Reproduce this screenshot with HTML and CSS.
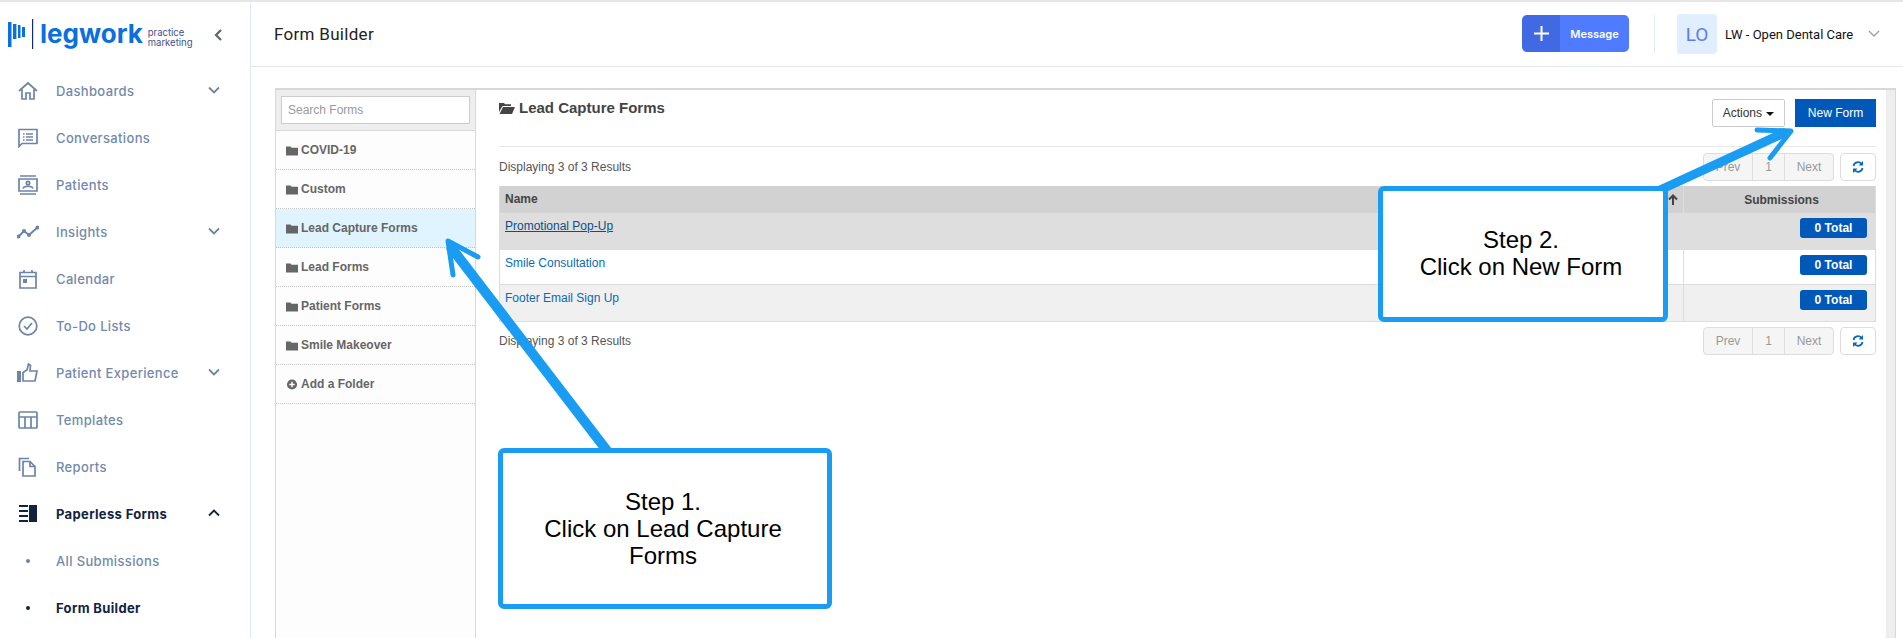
FILE: index.html
```html
<!DOCTYPE html>
<html lang="en">
<head>
<meta charset="utf-8">
<title>Form Builder</title>
<link rel="stylesheet" href="styles.css">
</head>
<body>
<div class="app">
  <aside class="sidebar">
    <div class="brand">
      <svg class="logo-mark" width="34" height="32" viewBox="0 0 34 32"><g fill="#0a6fe0"><rect x="0" y="3" width="3.500" height="25"/><rect x="5" y="5" width="3.400" height="15"/><rect x="10" y="6" width="2.500" height="13"/><rect x="14" y="8" width="3" height="10"/></g><rect x="24" y="0" width="1.200" height="30" fill="#12306b"/></svg>
      <span class="logo-word">legwork</span>
      <span class="logo-sub">practice<br>marketing</span>
      <svg class="collapse" width="10" height="14" viewBox="0 0 10 14"><path d="M8 2 3 7l5 5" fill="none" stroke="#5c6470" stroke-width="2.2"/></svg>
    </div>
    <nav class="nav">
      <a class="nav-item"><svg class="ico" viewBox="0 0 20 20"><path d="M1 10 10 2l9 8M4 8.500V18h4v-6h4v6h4V8.500" /></svg><span>Dashboards</span><svg class="chev" viewBox="0 0 12 8"><path d="m1 1.500 5 5 5-5"/></svg></a>
      <a class="nav-item"><svg class="ico" viewBox="0 0 20 20"><path d="M1 1.500h18v14H4l-3 3zM5 6h1.500M8 6h7M5 9h1.500M8 9h7M5 12h1.500M8 12h7"/></svg><span>Conversations</span></a>
      <a class="nav-item"><svg class="ico" viewBox="0 0 20 20"><path d="M2 1h16M2 19h16M1 4h18v12H1zM5 13.500c1-3 9-3 10 0"/><circle cx="10" cy="8" r="1.700"/></svg><span>Patients</span></a>
      <a class="nav-item"><svg class="ico ico-wide" viewBox="0 0 22 20"><path d="m1 15 6-6 5 4 9-8" stroke-width="2"/><circle cx="1.500" cy="14.500" r="1.200"/><circle cx="7" cy="9" r="1.200"/><circle cx="12" cy="13" r="1.200"/><circle cx="20.500" cy="5.500" r="1.200"/></svg><span>Insights</span><svg class="chev" viewBox="0 0 12 8"><path d="m1 1.500 5 5 5-5"/></svg></a>
      <a class="nav-item"><svg class="ico" viewBox="0 0 20 20"><path d="M2 3.500h16V19H2zM2 7.500h16M6 1v3M14 1v3"/><rect class="solid" x="5" y="10" width="4" height="4"/></svg><span>Calendar</span></a>
      <a class="nav-item"><svg class="ico" viewBox="0 0 20 20"><circle cx="10" cy="10" r="8.800"/><path d="m6 10 3 3 5-6"/></svg><span>To-Do Lists</span></a>
      <a class="nav-item"><svg class="ico ico-wide" viewBox="0 0 22 20"><rect class="solid" x="0" y="8" width="4" height="11"/><path d="M6 9.500 10 7l1.500-6 2 1.500-.5 5.500h7l-2 10H6z"/></svg><span>Patient Experience</span><svg class="chev" viewBox="0 0 12 8"><path d="m1 1.500 5 5 5-5"/></svg></a>
      <a class="nav-item"><svg class="ico" viewBox="0 0 20 20"><rect x="1" y="2" width="18" height="16" rx="1"/><path d="M1 7h18M7 7v11M13 7v11"/></svg><span>Templates</span></a>
      <a class="nav-item"><svg class="ico" viewBox="0 0 20 20"><path d="M1.500 14V1.500H11M5 4.500h7l5 5V19H5zM12 4.500v5h5"/></svg><span>Reports</span></a>
      <a class="nav-item nav-active"><svg class="ico" viewBox="0 0 20 20"><path d="M1 2h9M1 7h9M1 12h9M1 17h9" stroke-width="2"/><rect class="solid" x="11" y="1" width="8" height="17"/></svg><span>Paperless Forms</span><svg class="chev" viewBox="0 0 12 8"><path d="m1 6.500 5-5 5 5"/></svg></a>
      <a class="nav-item nav-sub"><i class="dot"></i><span>All Submissions</span></a>
      <a class="nav-item nav-sub nav-active"><i class="dot"></i><span>Form Builder</span></a>
    </nav>
  </aside>
  <div class="main">
    <header class="topbar">
      <h1 class="page-title">Form Builder</h1>
      <div class="msg-btn"><span class="msg-plus"><svg width="15" height="15" viewBox="0 0 15 15"><path d="M7.500 0v15M0 7.500h15" stroke="#fff" stroke-width="2"/></svg></span><span class="msg-label">Message</span></div>
      <div class="top-sep"></div>
      <div class="avatar">LO</div>
      <div class="account">LW - Open Dental Care</div>
      <svg class="acct-chev" width="12" height="8" viewBox="0 0 12 8"><path d="m1 1 5 5 5-5" fill="none" stroke="#9aa0a8" stroke-width="1.400"/></svg>
    </header>
    <section class="content">
      <div class="panel">
        <div class="folders">
          <div class="search-wrap"><input class="search" type="text" placeholder="Search Forms"></div>
          <div class="folder"><svg class="f-ico" viewBox="0 0 12 10"><path d="M0 1h4.500l1 1.200H12V10H0z"/></svg>COVID-19</div>
          <div class="folder"><svg class="f-ico" viewBox="0 0 12 10"><path d="M0 1h4.500l1 1.200H12V10H0z"/></svg>Custom</div>
          <div class="folder folder-on"><svg class="f-ico" viewBox="0 0 12 10"><path d="M0 1h4.500l1 1.200H12V10H0z"/></svg>Lead Capture Forms</div>
          <div class="folder"><svg class="f-ico" viewBox="0 0 12 10"><path d="M0 1h4.500l1 1.200H12V10H0z"/></svg>Lead Forms</div>
          <div class="folder"><svg class="f-ico" viewBox="0 0 12 10"><path d="M0 1h4.500l1 1.200H12V10H0z"/></svg>Patient Forms</div>
          <div class="folder"><svg class="f-ico" viewBox="0 0 12 10"><path d="M0 1h4.500l1 1.200H12V10H0z"/></svg>Smile Makeover</div>
          <div class="folder"><svg class="f-ico" viewBox="0 0 12 12"><circle cx="6" cy="6" r="5.500"/><path d="M6 3v6M3 6h6" stroke="#fff" stroke-width="1.600"/></svg>Add a Folder</div>
        </div>
        <div class="detail">
          <div class="detail-head">
            <h2 class="detail-title"><svg class="open-ico" width="16" height="12" viewBox="0 0 16 12"><path d="M0 10V1h5l1 1.300h6V4H3.500zM4 5h12l-3 7H0.500z"/></svg>Lead Capture Forms</h2>
            <div class="actions-wrap"><button class="btn-actions">Actions <i class="caret"></i></button><button class="btn-new">New Form</button></div>
          </div>
          <div class="result-row">
            <span class="result-text">Displaying 3 of 3 Results</span>
            <div class="pager"><span>Prev</span><span class="pg-n">1</span><span>Next</span></div>
            <button class="refresh"><svg width="12" height="12" viewBox="0 0 12 12"><path d="M1.500 5A4.500 4.500 0 0 1 9.500 3M10.500 7A4.500 4.500 0 0 1 2.500 9" fill="none" stroke="#0a6ab8" stroke-width="1.800"/><path d="M11 0v4.500H6.500zM1 12V7.500h4.500z" fill="#0a6ab8"/></svg></button>
          </div>
          <div class="forms-table">
            <div class="t-row t-head"><div class="c-name">Name<svg class="sort" width="10" height="11" viewBox="0 0 10 11"><path d="M5 11V2M1 5.500 5 1.500l4 4" fill="none" stroke="#444" stroke-width="2"/></svg></div><div class="c-sub">Submissions</div></div>
            <div class="t-row t-a"><div class="c-name"><a class="lnk lnk-hover">Promotional Pop-Up</a></div><div class="c-sub"><span class="total">0 Total</span></div></div>
            <div class="t-row t-b"><div class="c-name"><a class="lnk">Smile Consultation</a></div><div class="c-sub"><span class="total">0 Total</span></div></div>
            <div class="t-row t-c"><div class="c-name"><a class="lnk">Footer Email Sign Up</a></div><div class="c-sub"><span class="total">0 Total</span></div></div>
          </div>
          <div class="result-row result-bottom">
            <span class="result-text">Displaying 3 of 3 Results</span>
            <div class="pager"><span>Prev</span><span class="pg-n">1</span><span>Next</span></div>
            <button class="refresh"><svg width="12" height="12" viewBox="0 0 12 12"><path d="M1.500 5A4.500 4.500 0 0 1 9.500 3M10.500 7A4.500 4.500 0 0 1 2.500 9" fill="none" stroke="#0a6ab8" stroke-width="1.800"/><path d="M11 0v4.500H6.500zM1 12V7.500h4.500z" fill="#0a6ab8"/></svg></button>
          </div>
        </div>
      </div>
    </section>
  </div>
</div>
<svg class="arrows" width="1903" height="638" viewBox="0 0 1903 638">
  <g fill="none" stroke="#1a9cf2" stroke-linecap="round" stroke-linejoin="round">
    <path d="M608 452 450 246" stroke-width="10" stroke-linecap="butt"/>
    <path d="M478 257 448 241 453 275" stroke-width="5"/>
    <path d="M1660 190 1786 132" stroke-width="9" stroke-linecap="butt"/>
    <path d="M1757 130 1791 131 1770 158" stroke-width="5"/>
  </g>
</svg>
<div class="callout callout-one">Step 1.<br>Click on Lead Capture Forms</div>
<div class="callout callout-two">Step 2.<br>Click on New Form</div>
</body>
</html>
```
FILE: styles.css
```css
* { box-sizing: border-box; }
html, body { margin: 0; height: 638px; overflow: hidden; background: #fff; }
body { font-family: "Liberation Sans", Arial, sans-serif; color: #333; position: relative; }
.app { display: flex; height: 638px; border-top: 2px solid #e6e6e6; }

.sidebar { width: 251px; flex: none; border-right: 1px solid #dfe9f5; display: flex; flex-direction: column; }
.brand { height: 65px; flex: none; display: flex; align-items: flex-start; padding: 17px 0 0 8px; position: relative; }
.logo-mark { flex: none; }
.logo-word { font-family: Inter, sans-serif; font-weight: 700; font-size: 26px; line-height: 30px; color: #0a6fe0; margin-left: -2px; }
.logo-sub { font-family: Inter, sans-serif; font-size: 9.500px; line-height: 10px; color: #42518c; margin: 9px 0 0 5px; }
.collapse { position: absolute; left: 213px; top: 26px; }
.nav { display: flex; flex-direction: column; }
.nav-item { height: 47px; display: flex; align-items: center; padding-left: 18px; position: relative; font-family: Inter, sans-serif; font-size: 13px; font-weight: 500; letter-spacing: 0.35px; color: #7289ad; }
.ico { width: 20px; height: 20px; flex: none; margin-right: 18px; fill: none; stroke: #6c84a8; stroke-width: 1.700; }
.ico-wide { width: 22px; margin-left: -1px; margin-right: 17px; }
.ico .solid { fill: #6c84a8; stroke: none; }
.chev { position: absolute; left: 208px; top: 19px; width: 12px; height: 8px; fill: none; stroke: #6c84a8; stroke-width: 1.800; }
.nav-active { color: #12233f; font-weight: 700; }
.nav-active .ico, .nav-active .chev { stroke: #12233f; }
.nav-active .ico .solid { fill: #12233f; }
.nav-sub { padding-left: 26px; }
.dot { width: 4px; height: 4px; border-radius: 50%; background: #6c84a8; margin-right: 26px; }
.nav-active .dot { background: #12233f; }

.main { flex: 1; min-width: 0; display: flex; flex-direction: column; }
.topbar { height: 65px; border-bottom: 1px solid #dfe9f5; display: flex; align-items: center; padding-left: 23px; flex: none; }
.page-title { margin: 0 auto 0 0; font-family: Roboto, sans-serif; font-weight: 400; font-size: 17px; color: #222; letter-spacing: 0.3px; }
.msg-btn { display: flex; width: 107px; height: 37px; border-radius: 5px; overflow: hidden; margin-top: -1px; }
.msg-plus { width: 38px; background: #4169e1; display: flex; align-items: center; justify-content: center; }
.msg-label { flex: 1; background: #4f7bff; color: #fff; font-family: Inter, sans-serif; font-size: 11px; font-weight: 600; display: flex; align-items: center; justify-content: center; }
.top-sep { width: 1px; height: 38px; background: #e0eaf5; margin: 0 22px 0 25px; }
.avatar { width: 40px; height: 40px; background: #e0eeff; border-radius: 3px; color: #5a80e8; font-family: Roboto, sans-serif; font-size: 19px; display: flex; align-items: center; justify-content: center; }
.account { font-family: Roboto, sans-serif; font-size: 13px; color: #111; margin-left: 8px; width: 143px; }
.acct-chev { margin-right: 23px; }

.content { flex: 1; min-height: 0; padding: 21px 7px 0 24px; }
.panel { height: 100%; display: flex; border-top: 2px solid #d8d8d8; border-left: 1px solid #d8d8d8; border-right: 1px solid #d8d8d8; }
.folders { width: 200px; flex: none; background: #fdfdfd; border-right: 1px solid #d8d8d8; }
.search-wrap { height: 41px; background: #eee; border-bottom: 1px solid #d8d8d8; padding: 6px 5px 0 5px; }
.search { width: 189px; height: 28px; border: 1px solid #ccc; background: #fff; padding: 0 6px; font: 12px "Liberation Sans", Arial, sans-serif; outline: none; }
.search::placeholder { color: #999; }
.folder { height: 39px; border-bottom: 1px dotted #c4c4c4; display: flex; align-items: center; padding-left: 10px; font-size: 12px; font-weight: 700; color: #666; }
.folder-on { background: #e0f4ff; }
.f-ico { width: 12px; height: 11px; margin-right: 3px; fill: #666; flex: none; }

.detail { flex: 1; min-width: 0; padding: 0 10px 0 23px; border-right: 9px solid #eee; }
.detail-head { height: 57px; border-bottom: 1px solid #e8e8e8; display: flex; justify-content: space-between; }
.detail-title { margin: 9px 0 0; font-size: 15px; line-height: 17px; font-weight: 700; color: #444; display: flex; align-items: center; height: 17px; }
.open-ico { fill: #444; margin-right: 4px; }
.actions-wrap { display: flex; gap: 10px; padding-top: 9px; }
.btn-actions { width: 73px; height: 28px; background: #fff; border: 1px solid #ccc; border-radius: 2px; padding: 0; font: 12px "Liberation Sans", Arial, sans-serif; color: #333; }
.caret { display: inline-block; border: 4px solid transparent; border-top-color: #111; border-bottom: 0; vertical-align: middle; margin-left: 1px; }
.btn-new { width: 81px; height: 28px; background: #0059b8; border: 0; padding: 0; color: #fff; font: 12px "Liberation Sans", Arial, sans-serif; }

.result-row { display: flex; align-items: center; height: 28px; margin-top: 6px; font-size: 12px; color: #555; }
.result-text { margin-right: auto; }
.pager { display: flex; height: 28px; width: 131px; border: 1px solid #ddd; border-radius: 4px; background: #f5f5f5; color: #999; }
.pager span { flex: 1; display: flex; align-items: center; justify-content: center; }
.pager .pg-n { flex: none; width: 33px; border-left: 1px solid #ddd; border-right: 1px solid #ddd; }
.refresh { width: 36px; height: 28px; margin-left: 6px; background: #fff; border: 1px solid #ddd; border-radius: 4px; padding: 0; display: flex; align-items: center; justify-content: center; }
.result-bottom { margin-top: 5px; }

.forms-table { margin-top: 5px; border-left: 1px solid #ddd; border-right: 1px solid #ddd; font-size: 12px; }
.t-row { display: flex; border-bottom: 1px solid #ddd; height: 36px; }
.t-head { height: 27px; background: #d2d2d2; font-weight: 700; color: #444; border-bottom: 0; }
.t-a { background: #dedede; height: 37px; border-bottom: 0; }
.t-b { background: #fff; height: 35px; }
.t-c { background: #f0f0f0; height: 37px; }
.c-name { flex: 1; padding: 6px 5px; position: relative; }
.t-head .c-name { line-height: 15px; }
.c-sub { width: 192px; flex: none; border-left: 1px solid #ddd; display: flex; justify-content: flex-end; padding: 5px 8px 0 0; }
.t-head .c-sub { justify-content: center; align-items: center; padding: 0 0 0 4px; }
.sort { position: absolute; right: 5px; top: 8px; }
.lnk { color: #0a6ab8; }
.lnk-hover { color: #0a4f86; text-decoration: underline; }
.total { width: 67px; height: 20px; background: #0059b8; border-radius: 3px; color: #fff; display: flex; align-items: center; justify-content: center; font-size: 12px; font-weight: 700; }

.arrows { position: absolute; left: 0; top: 0; pointer-events: none; }
.callout { position: absolute; background: #fff; border: 5px solid #1a9cf2; border-radius: 6px; text-align: center; font-size: 24px; line-height: 27px; color: #000; }
.callout-one { left: 498px; top: 448px; width: 334px; height: 161px; padding: 35px 32px 0 28px; }
.callout-two { left: 1378px; top: 186px; width: 290px; height: 136px; padding: 35px 7px 0 3px; }
```
